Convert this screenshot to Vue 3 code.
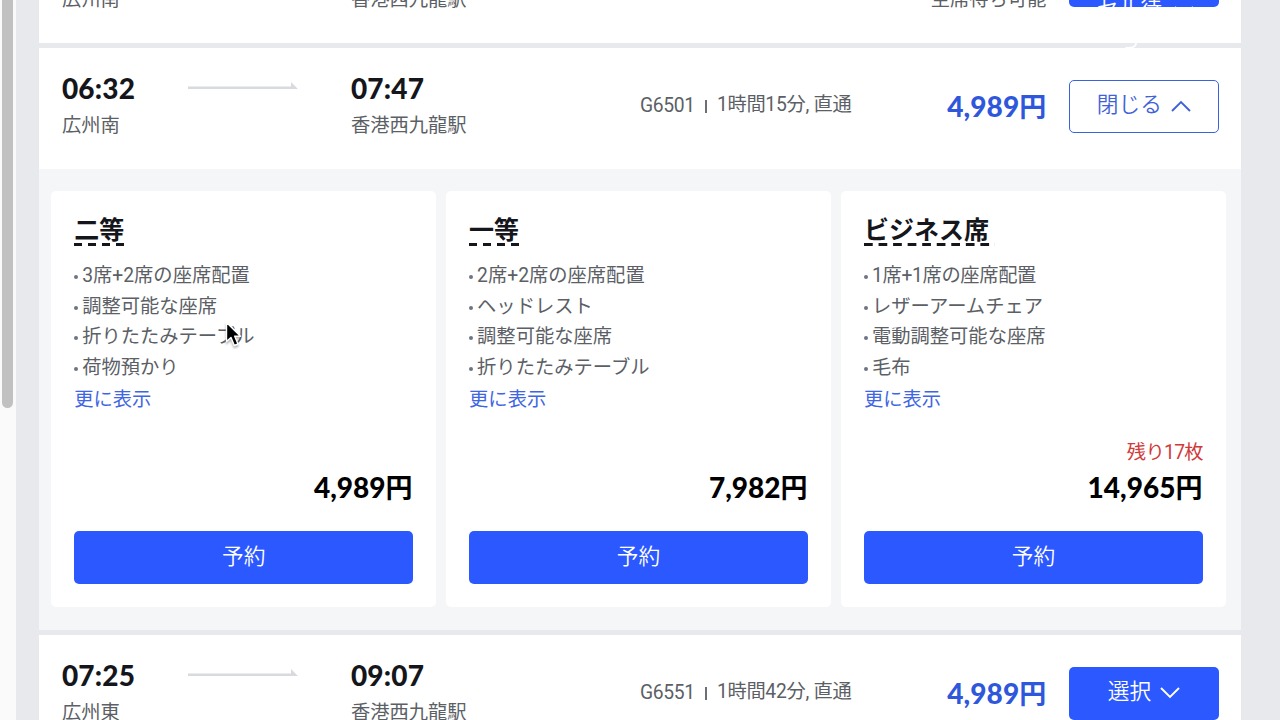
<template>
  <div class="page">
    <div class="scroll-track">
      <div class="scroll-thumb"></div>
    </div>

    <main class="train-list">
      <section v-for="train in trains" :key="train.id" class="train">
        <div class="train-row">
          <div class="station depart">
            <div class="time-line">
              <span class="time">{{ train.departTime }}</span>
              <svg class="arrow" width="110" height="8" viewBox="0 0 110 8">
                <path d="M0 4.6H103V0L110 7H0Z" fill="#d8dadd" />
              </svg>
            </div>
            <div class="station-name">{{ train.from }}</div>
          </div>
          <div class="station arrive">
            <div class="time">{{ train.arriveTime }}</div>
            <div class="station-name">{{ train.to }}</div>
          </div>
          <div class="info">
            <span>{{ train.number }}</span>
            <i class="divider"></i>
            <span class="duration">{{ train.duration }}</span>
          </div>
          <div class="price-box" :class="{ waiting: train.note }">
            <div class="price">{{ train.price }}<b class="yen">円</b></div>
            <div v-if="train.note" class="note">{{ train.note }}</div>
          </div>
          <button class="toggle-btn" :class="{ open: train.open, wrapped: train.note }" type="button">
            <span class="toggle-label">{{ train.action }}</span>
            <svg class="chevron" width="20" height="12" viewBox="0 0 20 12">
              <path
                :d="train.open ? 'M1 11L10 2L19 11' : 'M1 1L10 10L19 1'"
                fill="none"
                stroke="currentColor"
                stroke-width="1.9"
              />
            </svg>
          </button>
        </div>

        <div v-if="train.open" class="seats">
          <article v-for="seat in seats" :key="seat.name" class="seat-card">
            <h3 class="seat-title">{{ seat.name }}</h3>
            <ul class="features">
              <li v-for="feature in seat.features" :key="feature">{{ feature }}</li>
            </ul>
            <a class="more">更に表示</a>
            <div class="remaining">{{ seat.remaining }}</div>
            <div class="seat-price">{{ seat.price }}<b class="yen">円</b></div>
            <button class="book-btn" type="button">予約</button>
          </article>
        </div>
      </section>
    </main>

    <svg class="cursor" width="18" height="28" viewBox="0 0 18 28">
      <path
        d="M1.5 1.5V20.5L6 16.5L9.3 24.5L13 23L9.7 15.2H15.5Z"
        fill="#000"
        stroke="#fff"
        stroke-width="1.4"
        stroke-linejoin="round"
      />
    </svg>
  </div>
</template>

<script setup>
const trains = [
  {
    id: 1,
    departTime: '06:20',
    arriveTime: '07:25',
    from: '広州南',
    to: '香港西九龍駅',
    number: 'G6581',
    duration: '1時間5分, 直通',
    price: '4,989',
    note: '空席待ち可能',
    action: 'キャンセル待ち',
  },
  {
    id: 2,
    departTime: '06:32',
    arriveTime: '07:47',
    from: '広州南',
    to: '香港西九龍駅',
    number: 'G6501',
    duration: '1時間15分, 直通',
    price: '4,989',
    action: '閉じる',
    open: true,
  },
  {
    id: 3,
    departTime: '07:25',
    arriveTime: '09:07',
    from: '広州東',
    to: '香港西九龍駅',
    number: 'G6551',
    duration: '1時間42分, 直通',
    price: '4,989',
    action: '選択',
  },
];

const seats = [
  {
    name: '二等',
    features: ['3席+2席の座席配置', '調整可能な座席', '折りたたみテーブル', '荷物預かり'],
    price: '4,989',
  },
  {
    name: '一等',
    features: ['2席+2席の座席配置', 'ヘッドレスト', '調整可能な座席', '折りたたみテーブル'],
    price: '7,982',
  },
  {
    name: 'ビジネス席',
    features: ['1席+1席の座席配置', 'レザーアームチェア', '電動調整可能な座席', '毛布'],
    remaining: '残り17枚',
    price: '14,965',
  },
];
</script>

<style>
body {
  margin: 0;
  overflow: hidden;
}
</style>

<style scoped>
.page {
  position: relative;
  display: flex;
  height: 720px;
  overflow: hidden;
  background: #e7e9ed;
  font-family: Roboto, 'Noto Sans CJK JP', sans-serif;
  color: #5c5f66;
}

.scroll-track {
  width: 16px;
  box-sizing: border-box;
  padding-left: 2px;
  background: #fafafa;
}

.scroll-thumb {
  width: 11px;
  height: 408px;
  border-radius: 0 0 6px 6px;
  background: #c1c1c1;
}

.train-list {
  flex: none;
  width: 1202px;
  margin: -78.4px 0 0 23.4px;
}

.train {
  margin-bottom: 5.2px;
  background: #fff;
}

.train-row {
  display: flex;
  height: 121px;
  box-sizing: border-box;
  padding: 0 22.5px;
}

.station {
  padding-top: 24px;
}

.depart {
  width: 289px;
}

.arrive {
  width: 289px;
}

.time-line {
  display: flex;
  align-items: center;
  justify-content: space-between;
}

.arrow {
  margin: 0 auto 3px;
}

.time {
  height: 32px;
  line-height: 32px;
  font-family: Lato, 'Noto Sans CJK JP', sans-serif;
  font-size: 28px;
  font-weight: 900;
  letter-spacing: 0.2px;
  color: #14161c;
}

.station-name {
  margin-top: 7px;
  font-size: 19.3px;
  line-height: 29px;
}

.info {
  display: flex;
  align-items: center;
  height: 29px;
  margin-top: 43px;
  font-size: 19.3px;
  line-height: 29px;
  letter-spacing: -0.3px;
  white-space: pre;
}

.duration {
  margin-top: -2px;
}

.divider {
  width: 2px;
  height: 13px;
  margin: 2px 10px 0 10px;
  background: #6c6f76;
}

.price-box {
  margin: 39px 22.5px 0 auto;
  text-align: right;
}

.price-box.waiting {
  margin-top: 25.5px;
}

.price {
  height: 38px;
  line-height: 38px;
  font-family: Lato, 'Noto Sans CJK JP', sans-serif;
  font-size: 28px;
  font-weight: 900;
  letter-spacing: 0.1px;
  color: #2f57dc;
}

.yen {
  font-family: 'Noto Sans CJK JP', sans-serif;
  font-size: 27px;
  font-weight: 600;
}

.note {
  font-size: 19.3px;
  line-height: 29px;
}

.toggle-btn {
  display: flex;
  align-items: center;
  justify-content: center;
  gap: 9px;
  width: 150px;
  height: 53px;
  box-sizing: border-box;
  margin: 31.9px 0 0;
  padding: 0 22px 3px;
  border: 0;
  border-radius: 5px;
  background: #2b58ff;
  color: #fff;
  font-family: Roboto, 'Noto Sans CJK JP DemiLight', 'Noto Sans CJK JP', sans-serif;
  font-size: 21.7px;
  font-weight: 350;
  line-height: 31px;
}

.toggle-btn.open {
  border: 1.5px solid #3a62e0;
  background: #fff;
  color: #3f62d8;
}

.toggle-btn.wrapped {
  align-items: flex-start;
  gap: 12px;
  padding: 8px 19px 0 22px;
  text-align: center;
}

.wrapped .toggle-label {
  width: 66px;
}

.wrapped .chevron {
  margin-top: 44px;
}

.chevron {
  flex: none;
  margin-top: 3px;
}

.seats {
  display: grid;
  grid-template-columns: repeat(3, 385.5px);
  gap: 9.4px;
  height: 461px;
  box-sizing: border-box;
  padding: 22px 0 23px 11.5px;
  background: #f4f6f8;
}

.seat-card {
  display: flex;
  flex-direction: column;
  align-items: flex-start;
  padding: 22px 23.3px 23px;
  border-radius: 5px;
  background: #fff;
}

.seat-title {
  position: relative;
  margin: 0;
  height: 36px;
  font-size: 25px;
  font-weight: 700;
  line-height: 36px;
  color: #14161c;
}

.seat-title::after {
  position: absolute;
  right: -6px;
  bottom: 3px;
  left: 0;
  height: 2.4px;
  content: '';
  background: linear-gradient(90deg, #14161c 60%, transparent 60%) 0 0 / 14.3px 100% round;
}

.features {
  margin: 12.5px 0 0;
  padding: 0;
  list-style: none;
  font-size: 19.3px;
}

.features li {
  display: flex;
  align-items: center;
  height: 30.6px;
  line-height: 30.6px;
}

.features li::before {
  width: 4px;
  height: 4px;
  margin: 1px 4px 0 0;
  border-radius: 50%;
  background: #6d7486;
  content: '';
}

.seat-card:last-child li:first-child {
  letter-spacing: -0.35px;
}

.more {
  font-size: 19.3px;
  line-height: 32px;
  color: #3e66e4;
}

.remaining {
  align-self: flex-end;
  height: 28px;
  margin-top: 23px;
  font-size: 19.3px;
  letter-spacing: -0.7px;
  line-height: 28px;
  color: #cf3b3b;
}

.seat-price {
  align-self: flex-end;
  height: 38px;
  margin: 1px 0.5px 0 0;
  font-family: Lato, 'Noto Sans CJK JP', sans-serif;
  font-size: 28px;
  font-weight: 900;
  line-height: 38px;
  color: #000;
}

.book-btn {
  width: 100%;
  height: 53px;
  margin-top: auto;
  padding: 0 0 5px;
  border: 0;
  border-radius: 5px;
  background: #2b58ff;
  color: #fff;
  font-family: Roboto, 'Noto Sans CJK JP DemiLight', 'Noto Sans CJK JP', sans-serif;
  font-size: 21.7px;
  font-weight: 350;
}

.cursor {
  position: absolute;
  top: 321px;
  left: 225px;
  filter: drop-shadow(0 2px 1px rgba(0, 0, 0, 0.3));
}
</style>
